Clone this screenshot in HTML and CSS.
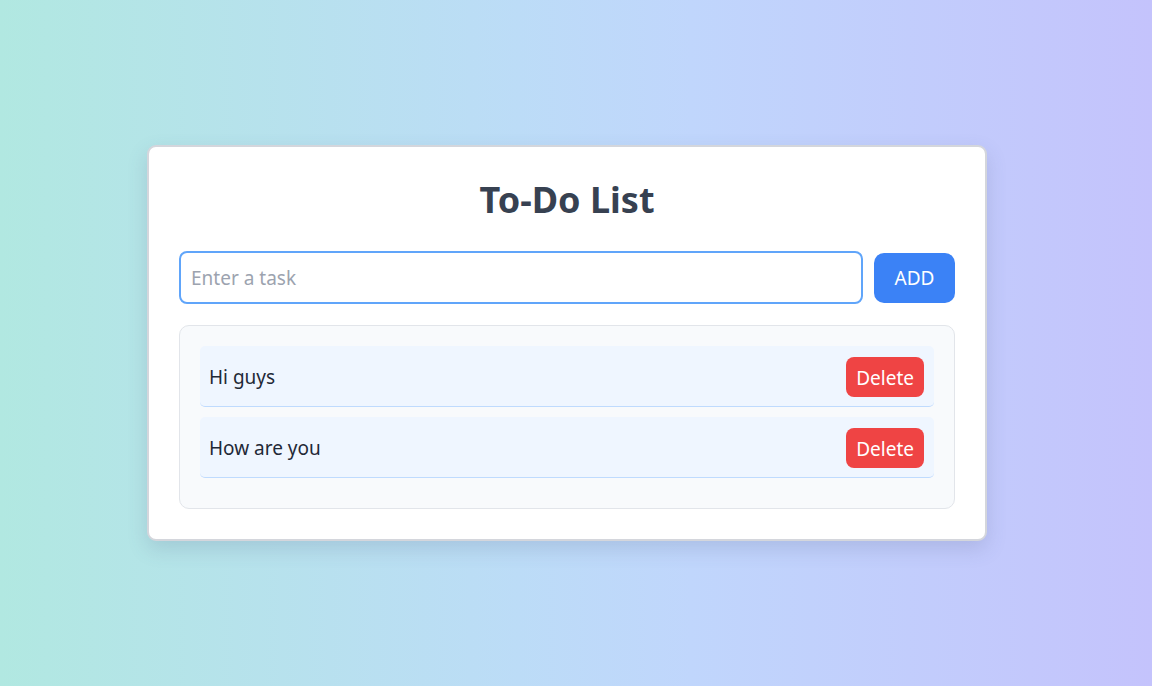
FILE: index.html
```html
<!DOCTYPE html>
<html lang="en">
<head>
<meta charset="utf-8">
<title>To-Do List</title>
<link rel="stylesheet" href="styles.css">
</head>
<body>
<main class="page">
  <section class="card">
    <h1 class="title">To-Do List</h1>
    <div class="entry">
      <input class="task-input" type="text" placeholder="Enter a task">
      <button class="add-btn">ADD</button>
    </div>
    <ul class="list">
      <li class="item"><span class="item-text">Hi guys</span><button class="del-btn">Delete</button></li>
      <li class="item"><span class="item-text">How are you</span><button class="del-btn">Delete</button></li>
    </ul>
  </section>
</main>
</body>
</html>
```

FILE: styles.css
```css
html, body {
  margin: 0;
  padding: 0;
  height: 100%;
}
body {
  font-family: "Noto Sans", "Open Sans", sans-serif;
  background: linear-gradient(90deg, #b1e8e1 0%, #bcdcf7 45%, #c0d6fc 60%, #c4c3fc 100%);
}
.page {
  height: 686px;
  display: flex;
  align-items: flex-start;
  padding: 145px 0 0 147px;
  box-sizing: border-box;
}
.card {
  width: 840px;
  box-sizing: border-box;
  background: #fff;
  border: 2px solid #d4d6dc;
  border-radius: 9px;
  padding: 28px 30px 30px 30px;
  box-shadow: 0 8px 20px rgba(80, 90, 130, 0.18);
}
.title {
  margin: 0 0 26px 0;
  text-align: center;
  font-size: 36px;
  line-height: 50px;
  font-weight: 700;
  color: #374151;
}
.entry {
  display: flex;
  align-items: center;
  gap: 11px;
  margin-bottom: 21px;
}
.task-input {
  flex: 1;
  height: 53px;
  box-sizing: border-box;
  border: 2px solid #60a5fa;
  border-radius: 8px;
  padding: 1px 10px 0 10px;
  font-family: inherit;
  font-size: 19px;
  color: #1f2937;
  outline: none;
}
.task-input::placeholder {
  color: #9ca3af;
}
.add-btn {
  width: 81px;
  height: 50px;
  border: none;
  border-radius: 10px;
  background: #3b82f6;
  color: #fff;
  font-family: inherit;
  font-size: 19px;
  padding-top: 2px;
}
.list {
  list-style: none;
  margin: 0;
  padding: 20px 20px 30px 20px;
  background: #f8fafc;
  border: 1px solid #e2e5ea;
  border-radius: 10px;
  display: flex;
  flex-direction: column;
  gap: 10px;
}
.item {
  display: flex;
  align-items: center;
  justify-content: space-between;
  height: 61px;
  box-sizing: border-box;
  padding: 1px 10px 0 9px;
  background: #eff6ff;
  border-bottom: 1px solid #bfdbfe;
  border-radius: 5px;
}
.item-text {
  font-size: 19px;
  color: #1f2937;
}
.del-btn {
  height: 40px;
  padding: 2px 10px 0 10px;
  border: none;
  border-radius: 8px;
  background: #ef4444;
  color: #fff;
  font-family: inherit;
  font-size: 19px;
}
```
